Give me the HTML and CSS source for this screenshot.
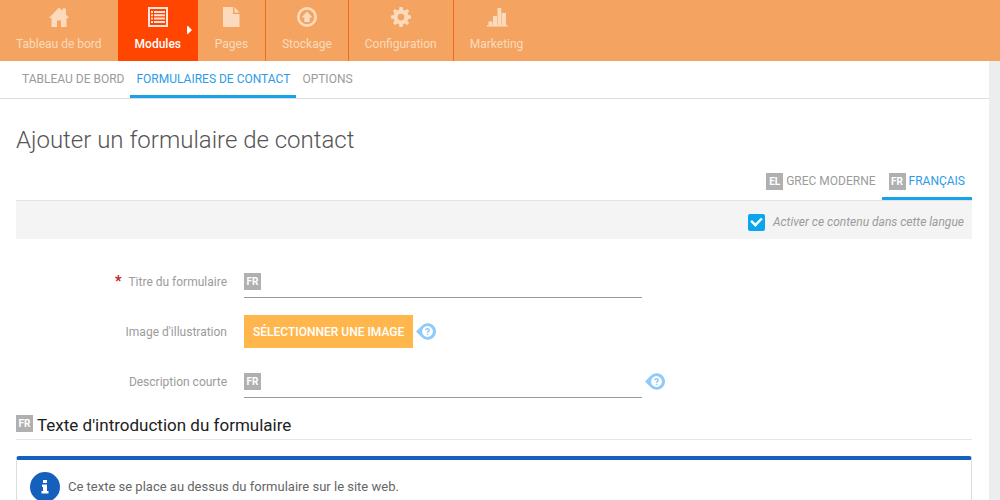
FILE: index.html
```html
<!DOCTYPE html>
<html lang="fr">
<head>
<meta charset="utf-8">
<title>Ajouter un formulaire de contact</title>
<link rel="stylesheet" href="styles.css">
</head>
<body>
<nav class="main-nav" aria-label="Navigation principale">
  <a href="#" class="nav-item">
    <svg class="nav-icon" viewBox="0 0 20 20"><path d="M10 0.500 13.500 4V1.500H17V7.500L20 11H17.500V20H12V13.500H8V20H2.500V11H0Z"/></svg>
    <span>Tableau de bord</span>
  </a>
  <a href="#" class="nav-item active">
    <svg class="nav-icon" viewBox="0 0 20 20"><path fill-rule="evenodd" d="M0 0H20V20H0ZM2 2V18H18V2ZM3 4H5V6H3ZM6 4H17V6H6ZM3 7.300H5V9.300H3ZM6 7.300H17V9.300H6ZM3 10.600H5V12.600H3ZM6 10.600H17V12.600H6ZM3 14H5V16H3ZM6 14H17V16H6Z"/></svg>
    <span>Modules</span>
    <svg class="caret" viewBox="0 0 5 8"><path d="M0 0H1L5 4 1 8H0Z"/></svg>
  </a>
  <a href="#" class="nav-item ruled">
    <svg class="nav-icon" viewBox="0 0 20 20"><path d="M2 0H12V7H18.500V20H2ZM13.500 0 18.500 5.500H13.500Z"/></svg>
    <span>Pages</span>
  </a>
  <a href="#" class="nav-item ruled">
    <svg class="nav-icon" viewBox="0 0 20 20"><path fill-rule="evenodd" d="M10 0A10 10 0 1 1 10 20A10 10 0 1 1 10 0ZM10 2.700A7.300 7.300 0 1 0 10 17.300A7.300 7.300 0 1 0 10 2.700ZM10 4.500 15.500 10.500H12.700V15H7.300V10.500H4.500Z"/></svg>
    <span>Stockage</span>
  </a>
  <a href="#" class="nav-item ruled">
    <svg class="nav-icon" viewBox="0 0 20 20"><path fill-rule="evenodd" d="M8.500 0H11.500L12.200 2.800 14.200 3.600 16.400 2.100 18.200 4 16.600 6.300 17.300 8.100 20 8.600V11.400L17.300 12 16.500 13.800 18.100 16.100 16 18.100 13.700 16.600 12 17.300 11.500 20H8.500L8 17.300 6.300 16.600 4 18.100 1.900 16 3.500 13.800 2.700 12 0 11.400V8.600L2.700 8.100 3.500 6.300 2 4 4 2 6.200 3.500 8 2.800ZM10 6.700A3.400 3.400 0 1 0 10 13.500A3.400 3.400 0 1 0 10 6.700Z"/></svg>
    <span>Configuration</span>
  </a>
  <a href="#" class="nav-item">
    <svg class="nav-icon" viewBox="0 0 20 20"><path d="M0 18H1.500V14.500H5.500V18H6V9H10V18H10.500V1H14.300V18H14.800V6H19V18H20.500V19.500H0Z"/></svg>
    <span>Marketing</span>
  </a>
</nav>
<div class="page">
  <nav class="tabs sub-nav" aria-label="Modules">
    <a href="#" class="tab">TABLEAU DE BORD</a>
    <a href="#" class="tab selected">FORMULAIRES DE CONTACT</a>
    <a href="#" class="tab">OPTIONS</a>
  </nav>
  <main class="content">
    <h1 class="title">Ajouter un formulaire de contact</h1>
    <nav class="tabs lang-nav" aria-label="Langues">
      <a href="#" class="tab"><span class="lang">EL</span>GREC MODERNE</a>
      <a href="#" class="tab selected"><span class="lang">FR</span>FRANÇAIS</a>
    </nav>
    <div class="enable">
      <input type="checkbox" class="check" id="enable" checked>
      <label for="enable">Activer ce contenu dans cette langue</label>
    </div>
    <form class="form">
      <div class="row">
        <label class="label" for="titre"><span class="required">*</span>Titre du formulaire</label>
        <div class="field"><span class="lang">FR</span><input class="input" id="titre" type="text" required></div>
      </div>
      <div class="row">
        <label class="label" for="image">Image d'illustration</label>
        <button class="button" id="image" type="button">SÉLECTIONNER UNE IMAGE</button>
        <svg class="help" viewBox="0 0 20 17"><path class="help-drop" d="M0 8.500 5.500 3A8.300 8.300 0 1 1 5.500 14Z"/><circle class="help-disc" cx="11.500" cy="8.500" r="5.400"/><path class="help-mark" d="M9.700 7.300Q9.700 5.700 11.500 5.700T13.300 7.200Q13.300 8 12.300 8.500 11.500 8.900 11.500 9.700M11.500 10.700V12"/></svg>
      </div>
      <div class="row">
        <label class="label" for="desc">Description courte</label>
        <div class="field"><span class="lang">FR</span><input class="input" id="desc" type="text"></div>
        <svg class="help" viewBox="0 0 20 17"><path class="help-drop" d="M0 8.500 5.500 3A8.300 8.300 0 1 1 5.500 14Z"/><circle class="help-disc" cx="11.500" cy="8.500" r="5.400"/><path class="help-mark" d="M9.700 7.300Q9.700 5.700 11.500 5.700T13.300 7.200Q13.300 8 12.300 8.500 11.500 8.900 11.500 9.700M11.500 10.700V12"/></svg>
      </div>
    </form>
    <h2 class="section"><span class="lang">FR</span>Texte d'introduction du formulaire</h2>
    <div class="notice">
      <svg class="info" viewBox="0 0 30 30"><circle cx="15" cy="15" r="15"/><path class="info-mark" d="M13 8H17V11H13ZM12 12.500H17V19H18.500V21.500H11.500V19H13V15H12Z"/></svg>
      <p class="notice-text">Ce texte se place au dessus du formulaire sur le site web.</p>
    </div>
  </main>
</div>
</body>
</html>
```
FILE: styles.css
```css
* { box-sizing: border-box; }
body {
  margin: 0;
  background: #eaeeef;
  font-family: Roboto, sans-serif;
  font-size: 12px;
  color: #9b9b9b;
}
a { color: inherit; text-decoration: none; }
.main-nav { display: flex; height: 61px; background: #f4a460; }
.nav-item {
  position: relative;
  display: flex;
  flex-direction: column;
  align-items: center;
  gap: 9px;
  min-width: 68px;
  padding: 7px 16px 0;
  color: #fbdabd;
  line-height: 16px;
}
.nav-item.active { padding: 7px 17px 0; background: #ff4500; color: #fff; font-weight: 500; }
.nav-item.ruled { border-right: 1px solid #f06a22; }
.nav-icon { width: 20px; height: 20px; fill: currentColor; overflow: visible; }
.active .nav-icon { fill: #ffe3d9; }
.caret { position: absolute; right: 6px; top: 26px; width: 5px; height: 8px; fill: #fff; }
.page { margin-right: 11px; background: #fff; }
.tabs { display: flex; }
.tab {
  display: flex;
  align-items: center;
  gap: 3px;
  height: 37px;
  padding: 2px 6px 0;
  border-bottom: 3px solid transparent;
}
.tab.selected { color: #2d9bea; border-color: #17a2e9; }
.sub-nav { padding-left: 16px; border-bottom: 1px solid #ddd; }
.content { padding: 24px 17px 0 16px; }
.title { margin: 0; font-size: 24px; font-weight: 300; line-height: 34px; color: #555; }
.lang-nav { justify-content: flex-end; margin-top: 6px; border-bottom: 1px solid #e2e2e2; }
.lang-nav .tab { padding: 2px 7px 0; }
.lang-nav .tab:first-child { padding-right: 6px; }
.lang {
  flex: none;
  width: 17px;
  height: 17px;
  background: #b0b0b0;
  color: #fff;
  font-family: Roboto, sans-serif;
  font-size: 10px;
  font-weight: 700;
  line-height: 17px;
  text-align: center;
}
.enable {
  display: flex;
  align-items: center;
  justify-content: flex-end;
  gap: 8px;
  height: 38px;
  padding: 4px 8px 0;
  background: #f4f4f4;
  font-style: italic;
}
.check {
  appearance: none;
  display: grid;
  place-items: center;
  width: 17px;
  height: 17px;
  margin: 0;
  border-radius: 2px;
  background: #0ba5ef;
}
.check:checked::before {
  content: "";
  width: 10px;
  height: 6px;
  margin-bottom: 3px;
  border: solid #fff;
  border-width: 0 0 3px 3px;
  transform: rotate(-45deg) scale(0.8);
}
.form { display: grid; gap: 17px; padding-top: 26px; }
.row { display: flex; align-items: center; height: 33px; }
.label { width: 211px; margin-right: 17px; text-align: right; }
.required { margin-right: 7px; color: #c62828; font-size: 14px; font-weight: 900; line-height: 12px; }
.field {
  display: flex;
  align-items: center;
  width: 398px;
  height: 33px;
  border-bottom: 1px solid #999;
}
.input { flex: 1; min-width: 0; border: 0; outline: 0; background: transparent; font: inherit; color: #444; }
.button {
  height: 33px;
  padding: 0 9px;
  border: 0;
  background: #ffb74d;
  color: #fff;
  font: 500 12px Roboto, sans-serif;
}
.help { width: 20px; height: 17px; margin-left: 3px; }
.help-drop { fill: #90caf9; }
.help-disc { fill: #fff; }
.help-mark { fill: none; stroke: #90caf9; stroke-width: 1.500; }
.section {
  display: flex;
  gap: 4px;
  margin: 17px 0 16px;
  padding-bottom: 4px;
  border-bottom: 1px solid #e5e5e5;
  color: #212121;
  font-size: 17px;
  font-weight: 400;
  line-height: 20px;
}
.notice {
  display: flex;
  align-items: center;
  gap: 8px;
  padding: 12px 13px;
  border: 1px solid #ddd;
  border-top: 4px solid #1560bd;
  border-radius: 3px;
}
.info { width: 30px; height: 30px; fill: #1560bd; }
.info-mark { fill: #fff; }
.notice-text { margin: 0; color: #666; font-size: 13px; line-height: 20px; }
```
